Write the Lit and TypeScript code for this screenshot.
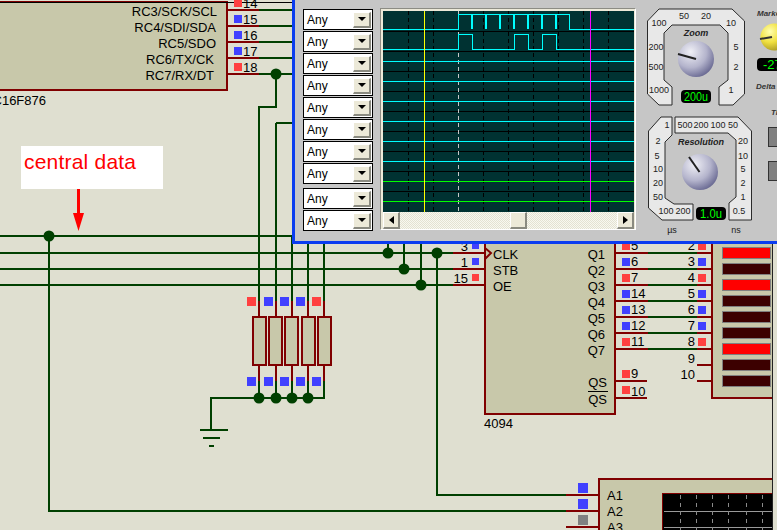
import { LitElement, html, css, svg } from "lit";
import { customElement } from "lit/decorators.js";

const RED = "#ff4040";
const BLUE = "#4040ff";

// schematic data, coordinates are the place on the sheet
const greenWires = [
  "M259 10H293", "M259 26H293", "M259 42H293", "M259 58H293", "M259 74H293",
  "M276 74V107H259V301", "M276 123H293", "M276 123V301", "M292 236V301", "M308 236V301", "M324 236V301",
  "M0 236H293", "M0 253H453", "M0 269H453", "M0 285H453",
  "M49 236V511H566", "M437 253V495H566",
  "M388 240V253", "M404 240V269", "M421 240V285",
  "M259 381V398", "M276 381V398", "M292 381V398", "M308 381V398", "M324 381V398H211V430",
  "M648 253H697", "M648 269H697", "M648 285H697", "M648 301H697", "M648 317H697", "M648 333H697", "M648 349H697",
];
const redWires = [
  "M227 10H259", "M227 26H259", "M227 42H259", "M227 58H259", "M227 74H259",
  "M453 253H485", "M453 269H485", "M453 285H485",
  "M566 495H598", "M566 511H598", "M566 527H598",
  "M615 381H647", "M615 398H647", "M697 365H712", "M697 381H712",
  ...[253, 269, 285, 301, 317, 333, 349].flatMap((y) => [`M615 ${y}H648`, `M697 ${y}H712`]),
  ...[259, 276, 292, 308, 324].flatMap((x) => [`M${x} 301V316`, `M${x} 365V381`]),
];
const nodes = [
  [276, 74], [49, 236], [388, 253], [437, 253], [404, 269], [421, 285],
  [259, 398], [276, 398], [292, 398], [308, 398],
];
const resistors = [252, 268, 284, 301, 317];
const squares: [number, number, number, string][] = [
  [234, -1, 8, RED], [234, 15, 8, BLUE], [234, 31, 8, BLUE], [234, 47, 8, BLUE], [234, 63, 8, RED],
  [247, 297, 9, RED], [264, 297, 9, BLUE], [280, 297, 9, BLUE], [296, 297, 9, BLUE], [312, 297, 9, RED],
  [247, 377, 9, BLUE], [264, 377, 9, BLUE], [280, 377, 9, BLUE], [296, 377, 9, BLUE], [312, 377, 9, BLUE],
  [472, 242, 7, BLUE], [472, 258, 7, BLUE], [472, 274, 7, RED],
  [622, 242, 8, RED], [622, 258, 8, BLUE], [622, 274, 8, RED], [622, 290, 8, BLUE], [622, 306, 8, BLUE], [622, 322, 8, BLUE], [622, 338, 8, RED],
  [622, 370, 8, RED], [622, 386, 8, RED],
  [698, 242, 8, RED], [698, 258, 8, BLUE], [698, 274, 8, RED], [698, 290, 8, BLUE], [698, 306, 8, BLUE], [698, 322, 8, BLUE], [698, 338, 8, RED],
  [578, 483, 10, BLUE], [578, 499, 10, BLUE], [578, 515, 10, "#808080"],
];
// x, baseline, text, anchor
const labels: [number, number, string, string][] = [
  [217, 16, "RC3/SCK/SCL", "end"], [216, 32, "RC4/SDI/SDA", "end"], [216, 48, "RC5/SDO", "end"],
  [214, 64, "RC6/TX/CK", "end"], [214, 80, "RC7/RX/DT", "end"], [46, 105, "PIC16F876", "end"],
  [243, 8, "14", "start"], [243, 24, "15", "start"], [243, 40, "16", "start"], [243, 56, "17", "start"], [243, 72, "18", "start"],
  [468, 251, "3", "end"], [468, 267, "1", "end"], [468, 283, "15", "end"],
  [493, 259, "CLK", "start"], [493, 275, "STB", "start"], [493, 291, "OE", "start"],
  ...["Q1", "Q2", "Q3", "Q4", "Q5", "Q6", "Q7"].map((t, i): [number, number, string, string] => [605, 259 + i * 16, t, "end"]),
  [607, 387, "QS", "end"], [607, 404, "QS", "end"], [484, 428, "4094", "start"],
  ...["5", "6", "7", "14", "13", "12", "11"].map((t, i): [number, number, string, string] => [631, 250 + i * 16, t, "start"]),
  [631, 378, "9", "start"], [631, 396, "10", "start"],
  ...["2", "3", "4", "5", "6", "7", "8"].map((t, i): [number, number, string, string] => [695, 250 + i * 16, t, "end"]),
  [695, 363, "9", "end"], [695, 379, "10", "end"],
  [607, 500, "A1", "start"], [607, 516, "A2", "start"], [607, 532, "A3", "start"],
];
const leds = [1, 0, 1, 0, 0, 0, 1, 0, 0];

// scope traces, in sheet pixels minus the plot origin (383, 11)
const px = (x: number) => x - 383;
const py = (y: number) => y - 11;
const dropdownCount = 10;
const gridX = [408, 433, 483, 508, 533, 558, 583, 608];
const gridY = [31, 51, 71, 91, 111, 131, 151, 171, 191];
const flatCyan = [61, 81, 101, 121, 141, 161];
const spikes = [472, 486, 500, 514, 528, 542, 556];

// knob panel scale numbers, x/y in panel pixels
const scale: [number, number, string][] = [
  [684, 16, "50"], [706, 16, "20"], [659, 23, "100"], [731, 23, "10"], [656, 47, "200"], [736, 47, "5"],
  [656, 67, "500"], [736, 67, "2"], [659, 90, "1000"], [731, 90, "1"],
  [667, 125, "1"], [685, 125, "500"], [701, 125, "200"], [718, 125, "100"], [733, 125, "50"],
  [658, 141, "2"], [743, 141, "20"], [657, 156, "5"], [743, 156, "10"], [658, 169, "10"], [743, 169, "5"],
  [658, 183, "20"], [743, 183, "2"], [658, 197, "50"], [743, 197, "1"], [666, 211, "100"], [683, 211, "200"], [739, 211, "0.5"],
];

@customElement("app-root")
export class AppRoot extends LitElement {
  static styles = css`
    :host {
      display: block;
      position: relative;
      width: 777px;
      height: 530px;
      overflow: hidden;
      background: #dfdfd0;
      font-family: "Liberation Sans", Arial, sans-serif;
    }
    .sheet {
      display: block;
    }
    .crisp {
      shape-rendering: crispEdges;
    }
    .wire {
      fill: none;
      stroke-width: 2;
    }
    .body {
      fill: #c8c8aa;
      stroke: #800000;
      stroke-width: 2;
    }
    .lbl {
      font-size: 13px;
      fill: #000;
    }
    .note {
      font-size: 21px;
      fill: #ff0000;
    }
    .window {
      position: absolute;
      left: 292px;
      top: -3px;
      width: 485px;
      height: 247px;
      box-sizing: border-box;
      border-left: 3px solid #0a3cf0;
      border-bottom: 3px solid #0a3cf0;
      background: #c6c6c6;
      display: flex;
      padding: 12px 0 0 8px;
    }
    .drops {
      display: flex;
      flex-direction: column;
      gap: 1px;
      width: 70px;
      margin-right: 7px;
    }
    .drop {
      box-sizing: border-box;
      height: 21px;
      border: 1px solid #000;
      background: #fff;
      display: flex;
      align-items: center;
      justify-content: space-between;
      padding: 0 1px 0 3px;
      font-size: 12px;
    }
    .drop.sep {
      margin-top: 3px;
    }
    .btn {
      box-sizing: border-box;
      background: #ece9d8;
      border-top: 1px solid #fff;
      border-left: 1px solid #fff;
      border-right: 2px solid #8a8a80;
      border-bottom: 2px solid #8a8a80;
      display: flex;
      align-items: center;
      justify-content: center;
      flex: none;
    }
    .drop .btn {
      width: 18px;
      height: 16px;
    }
    .tri-d {
      width: 0;
      height: 0;
      border-left: 4px solid transparent;
      border-right: 4px solid transparent;
      border-top: 4px solid #000;
    }
    .tri-l {
      width: 0;
      height: 0;
      border-top: 4px solid transparent;
      border-bottom: 4px solid transparent;
      border-right: 5px solid #000;
    }
    .tri-r {
      width: 0;
      height: 0;
      border-top: 4px solid transparent;
      border-bottom: 4px solid transparent;
      border-left: 5px solid #000;
    }
    .scope {
      box-sizing: border-box;
      width: 256px;
      height: 222px;
      margin-top: -1px;
      border: 1px solid #8c8c84;
      border-right-color: #fff;
      border-bottom-color: #fff;
      background: #ece9d8;
      padding: 2px 1px 0 2px;
    }
    .plot {
      display: block;
    }
    .bar {
      display: flex;
      height: 17px;
    }
    .bar .btn {
      width: 17px;
      height: 17px;
    }
    .track {
      flex: 1;
      display: flex;
      background: repeating-conic-gradient(#f8f8f0 0 25%, #e4e2d2 0 50%) 0 0 / 2px 2px;
    }
    .track .btn {
      margin-left: 110px;
    }
    .panel {
      display: block;
      margin-top: -9px;
      flex: none;
    }
    .plate {
      fill: #e8e8e8;
      stroke: #2a2a2a;
      stroke-width: 1;
    }
    .num {
      font-size: 9px;
      fill: #222;
      text-anchor: middle;
    }
    .cap {
      font-size: 9px;
      font-weight: bold;
      font-style: italic;
      fill: #222;
      text-anchor: middle;
    }
    .cap-s {
      font-size: 8px;
      font-weight: bold;
      font-style: italic;
      fill: #333;
    }
    .read {
      font-size: 13px;
      fill: #00ff00;
      text-anchor: middle;
    }
    .side {
      fill: #808080;
      stroke: #333;
      stroke-width: 1;
    }
  `;

  private renderSheet() {
    return html`<svg class="sheet" width="777" height="530" viewBox="0 0 777 530">
      <g class="crisp">
        <rect class="body" x="-4" y="2" width="231" height="88"></rect>
        <path d="M0 2H293" stroke="#000" stroke-width="1"></path>
        <rect class="body" x="485" y="200" width="130" height="214"></rect>
        <rect class="body" x="712" y="200" width="70" height="198"></rect>
        <rect class="body" x="599" y="479" width="190" height="60"></rect>
        <rect x="662" y="493" width="115" height="40" fill="#000" stroke="#800000" stroke-width="1"></rect>
        ${[511, 527].map((y) => svg`<path d="M664 ${y}H772" stroke="#9a9a9a" stroke-width="1"></path>`)}
        ${[680, 696, 712, 728, 746, 762].map(
          (x) => svg`<path d="M${x} 495V530" stroke="#8a8a8a" stroke-width="1" stroke-dasharray="4 4"></path>`
        )}
        ${greenWires.map((d) => svg`<path class="wire" d=${d} stroke="#004000"></path>`)}
        ${redWires.map((d) => svg`<path class="wire" d=${d} stroke="#800000"></path>`)}
        ${resistors.map(
          (x) => svg`<rect x=${x + 1} y="317" width="13" height="48" fill="#c8c8aa" stroke="#800000" stroke-width="2"></rect>`
        )}
        ${squares.map(
          ([x, y, s, c]) => svg`<rect x=${x} y=${y} width=${s} height=${s} fill=${c}></rect>`
        )}
        ${leds.map(
          (on, i) =>
            svg`<rect x="722.5" y=${247.5 + i * 16} width="48" height="11" fill=${on ? "#ff0000" : "#3c0000"} stroke="#808080"></rect>`
        )}
        <path d="M200 430H228M203 438H220M209 446H214" stroke="#004000" stroke-width="2"></path>
        <path d="M588 391H608" stroke="#000" stroke-width="1"></path>
        <rect x="773" y="240" width="4" height="290" fill="#dfdfd0"></rect>
        <path d="M772.5 240V530" stroke="#222" stroke-width="1"></path>
      </g>
      <path d="M485 248L491 253L485 259" fill="none" stroke="#800000" stroke-width="2"></path>
      ${nodes.map(([x, y]) => svg`<circle cx=${x} cy=${y} r="5.5" fill="#004000"></circle>`)}
      ${labels.map(
        ([x, y, t, a]) => svg`<text class="lbl" x=${x} y=${y} text-anchor=${a}>${t}</text>`
      )}
      <rect x="21" y="146" width="142" height="43" fill="#fff"></rect>
      <text class="note" x="24" y="169" textLength="112">central data</text>
      <path d="M77 189h3v24h4l-5.5 18l-5.5-18h4z" fill="#ff0000"></path>
    </svg>`;
  }

  private renderPlot() {
    return html`<svg class="plot crisp" width="251" height="201" viewBox="0 0 251 201">
      <rect width="251" height="201" fill="#003232"></rect>
      ${gridY.map((y) => svg`<path d="M0 ${py(y)}H251" stroke="#000" stroke-width="1"></path>`)}
      ${gridX.map(
        (x) => svg`<path d="M${px(x)} 0V201" stroke="#000" stroke-width="1" stroke-dasharray="4 3"></path>`
      )}
      <path d="M${px(458)} 0V201" stroke="#c8c8c8" stroke-width="1" stroke-dasharray="4 3"></path>
      <path
        d="M0 ${py(29)}H${px(458)}V${py(14)}H${px(569)}V${py(29)}H251"
        fill="none"
        stroke="#00ffff"
        stroke-width="1"
      ></path>
      ${spikes.map(
        (x) => svg`<path d="M${px(x)} ${py(14)}V${py(29)}" stroke="#00ffff" stroke-width="2"></path>`
      )}
      <path
        d="M0 ${py(49)}H${px(458)}V${py(34)}H${px(472)}V${py(49)}H${px(514)}V${py(34)}H${px(528)}V${py(49)}H${px(542)}V${py(34)}H${px(556)}V${py(49)}H251"
        fill="none"
        stroke="#00ffff"
        stroke-width="1"
      ></path>
      ${flatCyan.map((y) => svg`<path d="M0 ${py(y)}H251" stroke="#00ffff" stroke-width="1"></path>`)}
      ${[181, 201].map((y) => svg`<path d="M0 ${py(y)}H251" stroke="#00ff00" stroke-width="1"></path>`)}
      <path d="M${px(424)} 0V201" stroke="#ffff00" stroke-width="1"></path>
      <path d="M${px(590)} 0V201" stroke="#ff00ff" stroke-width="1"></path>
    </svg>`;
  }

  private renderPanel() {
    return html`<svg class="panel" width="141" height="243" viewBox="636 0 141 243">
      <defs>
        <radialGradient id="steel" cx="0.35" cy="0.3" r="0.8">
          <stop offset="0" stop-color="#f0f0f6"></stop>
          <stop offset="0.55" stop-color="#b4b4cc"></stop>
          <stop offset="1" stop-color="#5c5c88"></stop>
        </radialGradient>
        <radialGradient id="gold" cx="0.35" cy="0.3" r="0.8">
          <stop offset="0" stop-color="#ffffb0"></stop>
          <stop offset="0.5" stop-color="#f0e040"></stop>
          <stop offset="1" stop-color="#a09020"></stop>
        </radialGradient>
      </defs>
      <path
        class="plate"
        d="M647.5 21L659 9H732L744.5 21V94L733 105H719V87L728 80V33L720 25H672L664 33V80L672 87V105H659L647.5 94Z"
      ></path>
      <path
        class="plate"
        d="M648.5 131L661 117H672V135L665 142V198L674 204H693V220H662L648.5 208Z"
      ></path>
      <path
        class="plate"
        d="M675 117H738L751.5 131V220H729V203L736 197V140L728 133H675Z"
      ></path>
      ${scale.map(([x, y, t]) => svg`<text class="num" x=${x} y=${y + 3}>${t}</text>`)}
      <text class="cap" x="696" y="36">Zoom</text>
      <text class="cap" x="701" y="145" textLength="46">Resolution</text>
      <text class="num" x="672" y="233">µs</text>
      <text class="num" x="736" y="233">ns</text>

      <circle cx="696" cy="59" r="18" fill="url(#steel)"></circle>
      <path d="M678 54L696 59" stroke="#222" stroke-width="2"></path>
      <circle cx="700" cy="172" r="18" fill="url(#steel)"></circle>
      <path d="M689 157L699.5 172" stroke="#222" stroke-width="2"></path>
      <circle cx="774" cy="37" r="13.5" fill="url(#gold)"></circle>
      <path d="M760 39L772 37" stroke="#333" stroke-width="2"></path>

      <rect x="681" y="90" width="30" height="13" rx="4" fill="#000"></rect>
      <text class="read" x="696" y="101" textLength="24" lengthAdjust="spacingAndGlyphs">200u</text>
      <rect x="696" y="207" width="30" height="13" rx="4" fill="#000"></rect>
      <text class="read" x="711" y="218" textLength="22" lengthAdjust="spacingAndGlyphs">1.0u</text>
      <rect x="757" y="58" width="30" height="13" rx="4" fill="#000"></rect>
      <text class="read" x="776" y="69">-271</text>

      <text class="cap-s" x="757" y="16">Marker</text>
      <text class="cap-s" x="756" y="89">Delta</text>
      <text class="cap-s" x="771" y="115">Ti</text>
      <rect class="side" x="768.5" y="127.5" width="14" height="19"></rect>
      <rect class="side" x="768.5" y="161.5" width="14" height="19"></rect>
    </svg>`;
  }

  render() {
    const rows = Array.from({ length: dropdownCount }, (_, i) => i);
    return html`
      ${this.renderSheet()}
      <div class="window">
        <div class="drops">
          ${rows.map(
            (i) => html`<div class="drop ${i === 8 ? "sep" : ""}">
              <span>Any</span>
              <span class="btn"><span class="tri-d"></span></span>
            </div>`
          )}
        </div>
        <div class="scope">
          ${this.renderPlot()}
          <div class="bar">
            <span class="btn"><span class="tri-l"></span></span>
            <div class="track"><span class="btn"></span></div>
            <span class="btn"><span class="tri-r"></span></span>
          </div>
        </div>
        ${this.renderPanel()}
      </div>
    `;
  }
}
